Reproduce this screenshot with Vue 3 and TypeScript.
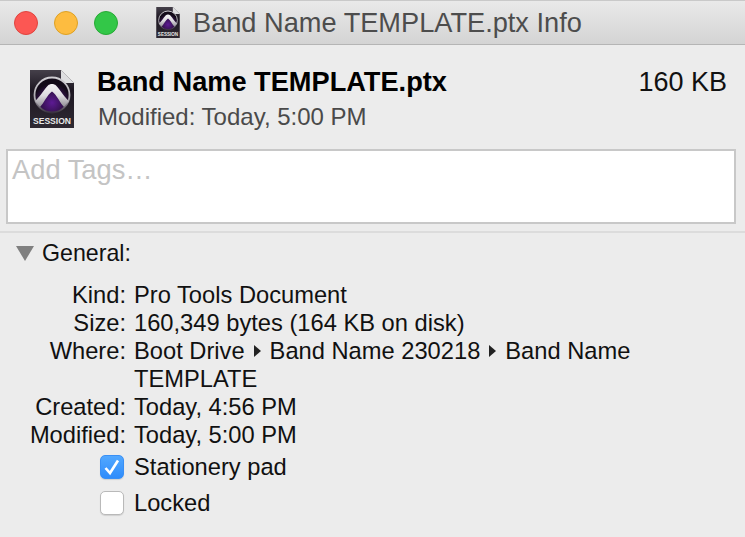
<script setup lang="ts">
interface InfoRow {
  label: string
  value: string
}

const topRows: InfoRow[] = [
  { label: 'Kind:', value: 'Pro Tools Document' },
  { label: 'Size:', value: '160,349 bytes (164 KB on disk)' }
]

const whereParts = ['Boot Drive', 'Band Name 230218', 'Band Name']

const dateRows: InfoRow[] = [
  { label: 'Created:', value: 'Today, 4:56 PM' },
  { label: 'Modified:', value: 'Today, 5:00 PM' }
]
</script>

<template>
  <div class="window">
    <header class="titlebar">
      <div class="lights">
        <span class="light red"></span>
        <span class="light yellow"></span>
        <span class="light green"></span>
      </div>
      <svg class="title-icon" width="24" height="31" viewBox="0 0 44 58">
        <use href="#session-doc" />
      </svg>
      <span class="title-text">Band Name TEMPLATE.ptx Info</span>
    </header>

    <section class="summary">
      <svg class="file-icon" width="44" height="58" viewBox="0 0 44 58">
        <defs>
          <radialGradient id="session-purple" cx="50%" cy="72%" r="55%">
            <stop offset="0" stop-color="#5d1a94" />
            <stop offset="0.7" stop-color="#2c1040" />
            <stop offset="1" stop-color="#120a18" />
          </radialGradient>
          <linearGradient id="session-body" x1="0" y1="0" x2="0" y2="1">
            <stop offset="0" stop-color="#45404a" />
            <stop offset="0.35" stop-color="#1d1722" />
            <stop offset="1" stop-color="#2e2932" />
          </linearGradient>
          <linearGradient id="session-ring" x1="0" y1="0" x2="0" y2="1">
            <stop offset="0" stop-color="#cfcdd2" />
            <stop offset="0.6" stop-color="#a9a6ad" />
            <stop offset="1" stop-color="#3a3340" />
          </linearGradient>
          <linearGradient id="session-arch" x1="0" y1="0" x2="0" y2="1">
            <stop offset="0" stop-color="#f4f3f5" />
            <stop offset="0.5" stop-color="#dddbe0" />
            <stop offset="1" stop-color="#8f8c93" />
          </linearGradient>
          <g id="session-doc">
            <path d="M0 0H31L44 13V58H0Z" fill="url(#session-body)" />
            <path d="M31 0L44 13H31Z" fill="#dedee0" />
            <circle cx="22" cy="25" r="17.5" fill="url(#session-purple)" stroke="url(#session-ring)" stroke-width="1.8" />
            <path d="M5 31C9 28 13 21 18 15.5C20 13.5 24 13.5 26 15.5C31 21 35 28 39 31L34 37C30 33 27 25 22 21.5C17 25 14 33 10 37Z" fill="url(#session-arch)" />
            <text x="22" y="54" text-anchor="middle" class="session-label" textLength="38" lengthAdjust="spacingAndGlyphs">SESSION</text>
          </g>
        </defs>
        <use href="#session-doc" />
      </svg>
      <div class="summary-text">
        <div class="summary-top">
          <strong class="file-name">Band Name TEMPLATE.ptx</strong>
          <span class="file-size">160 KB</span>
        </div>
        <div class="file-modified">Modified: Today, 5:00 PM</div>
      </div>
    </section>

    <div class="tags">Add Tags…</div>

    <section class="general">
      <div class="general-head">
        <span class="triangle"></span>
        <span class="general-title">General:</span>
      </div>

      <div class="grid">
        <template v-for="row in topRows" :key="row.label">
          <span class="label">{{ row.label }}</span>
          <span class="value">{{ row.value }}</span>
        </template>

        <span class="label">Where:</span>
        <span class="value path">
          <template v-for="(part, i) in whereParts" :key="part">
            <span v-if="i > 0" class="crumb"></span>
            <span>{{ part }}</span>
          </template>
          <span>TEMPLATE</span>
        </span>

        <template v-for="row in dateRows" :key="row.label">
          <span class="label">{{ row.label }}</span>
          <span class="value">{{ row.value }}</span>
        </template>
      </div>

      <div class="checks">
        <label class="check">
          <span class="box checked">
            <svg width="22" height="22" viewBox="0 0 22 22" fill="none" stroke="#fff" stroke-width="2.6">
              <path d="M4.5 12L9 17L17 4.5" />
            </svg>
          </span>
          <span>Stationery pad</span>
        </label>
        <label class="check">
          <span class="box"></span>
          <span>Locked</span>
        </label>
      </div>
    </section>
  </div>
</template>

<style>
html,
body {
  margin: 0;
  background: #ececec;
}
</style>

<style scoped>
.window {
  width: 745px;
  height: 537px;
  overflow: hidden;
  box-sizing: border-box;
  background: #ececec;
  color: #111;
  font-family: "Liberation Sans", Arial, sans-serif;
  font-size: 23.7px;
}

.titlebar {
  display: flex;
  align-items: center;
  height: 45px;
  box-sizing: border-box;
  padding-left: 14px;
  background: linear-gradient(#e9e9e9, #d4d4d4);
  border-top: 1px solid #c9c9c9;
  border-bottom: 1px solid #b5b5b5;
}

.lights {
  display: flex;
  gap: 16px;
}

.light {
  width: 24px;
  height: 24px;
  box-sizing: border-box;
  border-radius: 50%;
  border: 1px solid transparent;
}

.red {
  background: #fc5753;
  border-color: #e0443e;
}

.yellow {
  background: #fdbc40;
  border-color: #dea123;
}

.green {
  background: #33c748;
  border-color: #27aa35;
}

.title-icon {
  margin-left: 38px;
}

.title-text {
  margin: 1px 0 0 13px;
  font-size: 27.2px;
  color: #4d4d4d;
}

.summary {
  display: flex;
  height: 103px;
  box-sizing: border-box;
  padding: 25px 18px 0 30px;
}

.file-icon {
  flex-shrink: 0;
}

.session-label {
  font-size: 8.5px;
  font-weight: bold;
  fill: #e8e8e8;
}

.summary-text {
  flex: 1;
  margin: -2px 0 0 23px;
}

.summary-top {
  display: flex;
  justify-content: space-between;
  align-items: baseline;
  line-height: 28px;
}

.file-name {
  font-size: 27.2px;
  color: #000;
}

.file-size {
  font-size: 27px;
  color: #111;
}

.file-modified {
  margin-top: 7px;
  margin-left: 1px;
  font-size: 24px;
  line-height: 28px;
  color: #4a4a4a;
}

.tags {
  height: 75px;
  box-sizing: border-box;
  margin: 1px 9px 0 6px;
  padding: 3px 4px;
  background: #fff;
  border: 2px solid #c8c8c8;
  font-size: 27.3px;
  line-height: 32px;
  color: #c4c4c4;
}

.general {
  margin-top: 7px;
  border-top: 2px solid #dcdcdc;
}

.general-head {
  display: flex;
  align-items: center;
  height: 40px;
  padding-left: 16px;
  gap: 8px;
}

.general-title {
  font-size: 23.2px;
}

.triangle {
  width: 0;
  height: 0;
  border-left: 9px solid transparent;
  border-right: 9px solid transparent;
  border-top: 15px solid #808080;
}

.grid {
  display: grid;
  grid-template-columns: 126px 510px;
  column-gap: 8px;
  margin-top: 8px;
  line-height: 28px;
}

.label {
  text-align: right;
}

.path {
  display: flex;
  flex-wrap: wrap;
  align-items: center;
}

.crumb {
  width: 0;
  height: 0;
  margin: 0 9px;
  border-top: 6px solid transparent;
  border-bottom: 6px solid transparent;
  border-left: 7px solid #222;
}

.checks {
  display: flex;
  flex-direction: column;
  gap: 12px;
  margin: 6px 0 0 100px;
}

.check {
  display: flex;
  align-items: center;
  gap: 10px;
  height: 24px;
}

.box {
  width: 24px;
  height: 24px;
  box-sizing: border-box;
  border-radius: 5px;
  background: #fff;
  border: 1px solid #b9b9b9;
  box-shadow: 0 1px 1px rgba(0, 0, 0, 0.12);
}

.box.checked {
  display: flex;
  background: linear-gradient(#52a8ff, #2f8cfb);
  border-color: #3a90f5;
}
</style>
